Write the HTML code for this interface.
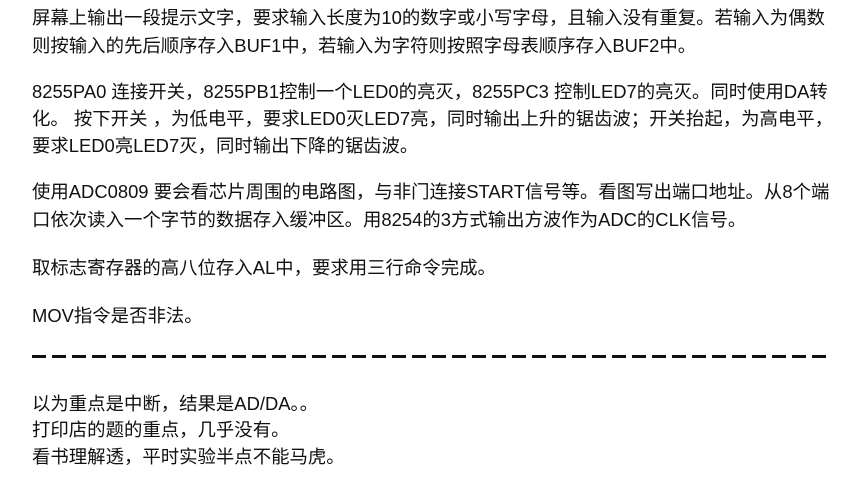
<!DOCTYPE html>
<html><head><meta charset="utf-8"><style>
body{margin:0;width:860px;height:482px;background:#fff;position:relative;overflow:hidden;font-family:"Liberation Sans","Noto Sans CJK SC",sans-serif;font-size:18.4px;color:#111;}
.l{position:absolute;left:32px;line-height:26px;white-space:nowrap;}
.d{position:absolute;left:32px;top:355px;width:800px;height:3px;background:repeating-linear-gradient(90deg,#111 0 14px,transparent 14px 20px);}
</style></head><body>
<div class="l" style="top:5px">屏幕上输出一段提示文字，要求输入长度为10的数字或小写字母，且输入没有重复。若输入为偶数</div>
<div class="l" style="top:33px">则按输入的先后顺序存入BUF1中，若输入为字符则按照字母表顺序存入BUF2中。</div>
<div class="l" style="top:79px">8255PA0 连接开关，8255PB1控制一个LED0的亮灭，8255PC3 控制LED7的亮灭。同时使用DA转</div>
<div class="l" style="top:106px">化。 按下开关 ，为低电平，要求LED0灭LED7亮，同时输出上升的锯齿波；开关抬起，为高电平，</div>
<div class="l" style="top:133px">要求LED0亮LED7灭，同时输出下降的锯齿波。</div>
<div class="l" style="top:179px">使用ADC0809 要会看芯片周围的电路图，与非门连接START信号等。看图写出端口地址。从8个端</div>
<div class="l" style="top:207px">口依次读入一个字节的数据存入缓冲区。用8254的3方式输出方波作为ADC的CLK信号。</div>
<div class="l" style="top:255px">取标志寄存器的高八位存入AL中，要求用三行命令完成。</div>
<div class="l" style="top:303px">MOV指令是否非法。</div>
<div class="d"></div>
<div class="l" style="top:391px">以为重点是中断，结果是AD/DA。。</div>
<div class="l" style="top:417px">打印店的题的重点，几乎没有。</div>
<div class="l" style="top:444px">看书理解透，平时实验半点不能马虎。</div>
</body></html>
